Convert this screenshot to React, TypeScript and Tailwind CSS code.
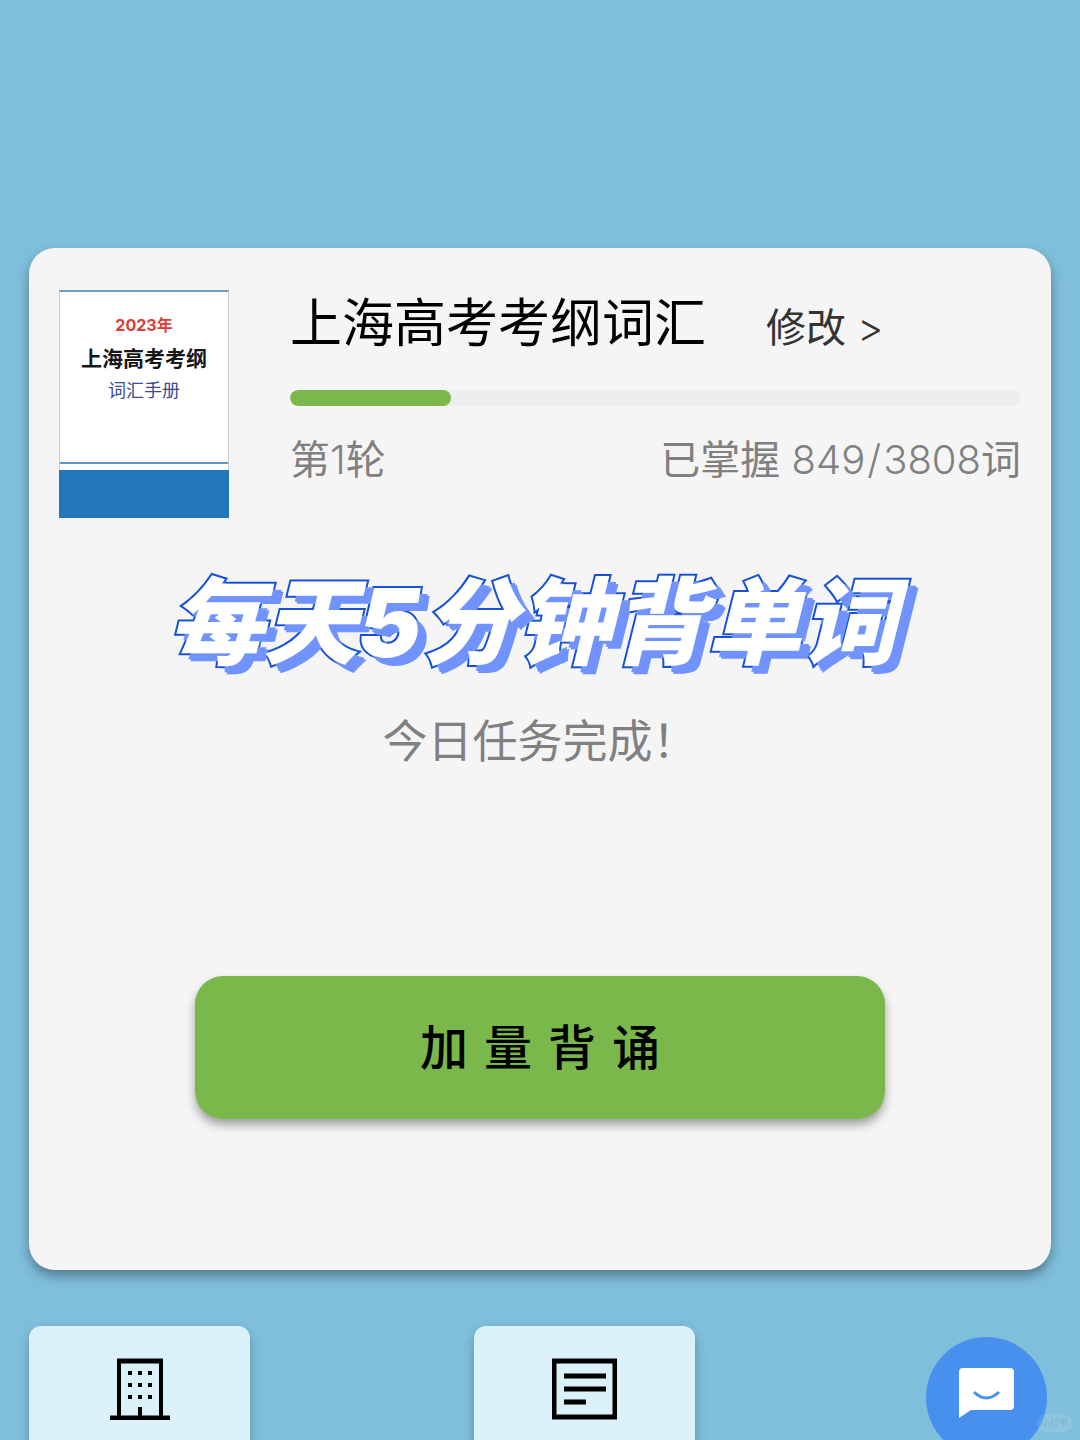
function BuildingIcon() {
  return (
    <svg viewBox="0 0 60 62" className="h-[62px] w-[60px]" aria-hidden="true">
      <path d="M9 60V3H51V60" fill="none" stroke="#000" strokeWidth="4" />
      <path d="M7 3H53M0 60H60" stroke="#000" strokeWidth="5" />
      <path d="M30 49V60" stroke="#000" strokeWidth="4" />
      {[15, 27, 39].map((y) =>
        [20, 30, 40].map((x) => <rect key={`${x}-${y}`} x={x - 2} y={y - 2} width="4" height="4" />),
      )}
    </svg>
  );
}

function ArticleIcon() {
  return (
    <svg viewBox="0 0 65 62" className="h-[62px] w-[65px]" aria-hidden="true">
      <rect x="2" y="3" width="61" height="56" fill="none" stroke="#000" strokeWidth="5" />
      <path d="M12 18H54M12 31H54M12 44H34" stroke="#000" strokeWidth="5" />
    </svg>
  );
}

function ChatIcon() {
  return (
    <svg viewBox="0 0 56 52" className="h-[52px] w-[56px]" aria-hidden="true">
      <path d="M4 1H51Q55 1 55 5V39Q55 43 51 43H12L0 51V5Q0 1 4 1Z" fill="#fff" />
      <path d="M15 25Q27 37 40 25" fill="none" stroke="#4790ee" strokeWidth="3" />
    </svg>
  );
}

function BookCover() {
  return (
    <div className="flex h-[228px] w-[170px] shrink-0 flex-col border border-t-2 border-[#c5cdd4] border-t-[#6a9fc6] bg-white">
      <div className="flex flex-1 flex-col items-center pt-[19px]">
        <p className="text-[16px] leading-7 font-bold text-[#e23a35]">2023年</p>
        <p className="text-[21px] leading-10 font-bold whitespace-nowrap text-[#161616]">上海高考考纲</p>
        <p className="text-[18px] leading-6 text-[#3d4c90]">词汇手册</p>
      </div>
      <div className="mb-1.5 h-0.5 bg-[#5c98c6]" />
      <div className="-mx-px -mb-px h-12 bg-[#2177b8]" />
    </div>
  );
}

function Progress({ done, total }: { done: number; total: number }) {
  const percent = Math.floor((done / total) * 100);
  return (
    <div>
      <div
        role="progressbar"
        aria-label="掌握进度"
        aria-valuenow={done}
        aria-valuemax={total}
        className="h-4 overflow-hidden rounded-full bg-[#eeeeee]"
      >
        <div className="h-full rounded-full bg-[#7ab84b]" style={{ width: `${percent}%` }} />
      </div>
      <div className="mt-6 flex justify-between text-[40px] leading-[60px] text-[#808080]">
        <span>
          第<span className="font-light">1</span>轮
        </span>
        <span>
          已掌握{' '}
          <span className="font-light">
            {done}
            <span className="px-0.5">/</span>
            {total}
          </span>
          词
        </span>
      </div>
    </div>
  );
}

export default function App() {
  return (
    <div className="relative h-screen overflow-hidden bg-[#7fbfdc] px-[29px] pt-[248px] font-['Inter','Noto_Sans_CJK_SC',sans-serif]">
      <main className="flex flex-col items-center rounded-[26px] bg-[#f5f5f5] px-[30px] pt-[42px] pb-[151px] shadow-[0_6px_12px_rgba(0,0,0,0.35)]">
        <section className="flex w-full gap-[61px]">
          <BookCover />
          <div className="min-w-0 flex-1">
            <div className="mb-8 flex h-[68px] items-center gap-[60px] whitespace-nowrap">
              <h1 className="text-[52px] leading-[64px]">上海高考考纲词汇</h1>
              <button type="button" className="mt-2 text-[40px] leading-[56px] text-[#333]">
                修改 <span className="font-light">&gt;</span>
              </button>
            </div>
            <Progress done={849} total={3808} />
          </div>
        </section>

        <h2 className="mt-10 mr-4 text-[95px] leading-[130px] font-black whitespace-nowrap text-white italic [-webkit-text-stroke:4px_#1650d8] [paint-order:stroke_fill] [text-shadow:7px_6px_0_#7093ff,9px_8px_0_#7093ff]">
          每天5分钟背单词
        </h2>
        <p className="mt-5 text-[45px] leading-[68px] text-[#808080]">今日任务完成！</p>

        <button
          type="button"
          className="mt-[200px] flex h-[143px] w-[690px] max-w-full items-center justify-center gap-4 rounded-[28px] bg-[#7ab84b] text-[48px] font-medium text-black shadow-[0_6px_10px_rgba(0,0,0,0.35)]"
        >
          <span>加</span> <span>量</span> <span>背</span> <span>诵</span>
        </button>
      </main>

      <nav className="mt-[56px] flex gap-[224px]">
        <button type="button" aria-label="学校" className="flex h-[221px] w-[221px] justify-center rounded-xl bg-[#dbf1fa] pt-8 shadow-[0_6px_12px_rgba(0,0,0,0.25)]">
          <BuildingIcon />
        </button>
        <button type="button" aria-label="文章" className="flex h-[221px] w-[221px] justify-center rounded-xl bg-[#dbf1fa] pt-8 shadow-[0_6px_12px_rgba(0,0,0,0.25)]">
          <ArticleIcon />
        </button>
      </nav>

      <button type="button" aria-label="客服" className="absolute right-[33px] -bottom-[18px] flex h-[121px] w-[121px] justify-center rounded-full bg-[#4790ee] pt-[30px]">
        <ChatIcon />
      </button>
      <span className="absolute right-2 bottom-2 rounded-full bg-white/10 px-1 text-[9px] leading-[18px] text-slate-600/20">小红书</span>
    </div>
  );
}
